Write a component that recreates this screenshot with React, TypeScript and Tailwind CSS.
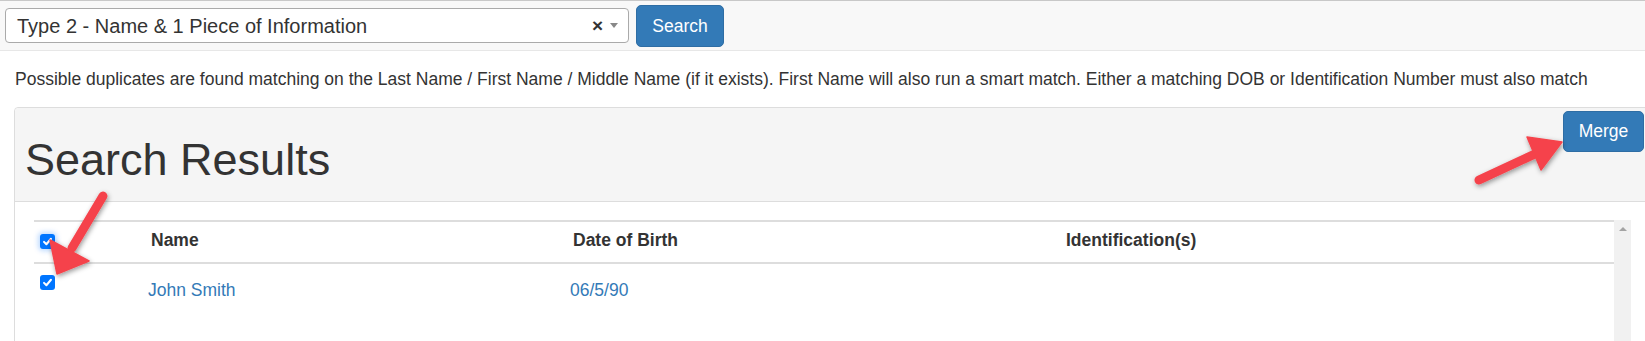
import React from 'react';

function CheckBox({ glow = false }: { glow?: boolean }) {
  return (
    <span
      className={
        'flex h-[15px] w-[15px] items-center justify-center rounded-[3px] bg-[#0075ff] ' +
        (glow ? 'shadow-[0_0_5px_2px_rgba(0,117,255,0.25)]' : '')
      }
    >
      <svg width="11" height="11" viewBox="0 0 12 12">
        <path d="M2.2 6.4 L4.8 9 L9.8 3" fill="none" stroke="#fff" strokeWidth="2.2" strokeLinecap="round" strokeLinejoin="round" />
      </svg>
    </span>
  );
}

function Annotations() {
  return (
    <svg className="pointer-events-none absolute left-0 top-0" width="1645" height="341">
      <defs>
        <filter id="shade" x="-30%" y="-30%" width="160%" height="160%">
          <feDropShadow dx="1" dy="2" stdDeviation="2.5" floodColor="#000" floodOpacity="0.4" />
        </filter>
      </defs>
      {/* arrow to checkbox */}
      <g filter="url(#shade)" fill="#f5434b" stroke="#f5434b">
        <line x1="103" y1="196" x2="72" y2="248" strokeWidth="9" strokeLinecap="round" />
        <polygon points="57,274 50,240 89,261" strokeWidth="1.5" strokeLinejoin="round" />
      </g>
      {/* arrow to merge */}
      <g filter="url(#shade)" fill="#f5434b" stroke="#f5434b">
        <line x1="1479" y1="180" x2="1537" y2="153" strokeWidth="9" strokeLinecap="round" />
        <polygon points="1562,142 1527,137 1541,170" strokeWidth="1.5" strokeLinejoin="round" />
      </g>
    </svg>
  );
}

export default function App() {
  return (
    <div className="relative h-[341px] w-[1645px] overflow-hidden bg-white font-['Liberation_Sans',Arial,sans-serif] text-[#333]">
      {/* Toolbar */}
      <div className="flex h-[51px] items-start border-t border-b border-t-[#c8c8c8] border-b-[#e7e7e7] bg-[#f8f8f8]">
        <div className="ml-[5px] mt-[7px] flex h-[35px] w-[624px] items-center rounded-[4px] border border-[#aaa] bg-white pl-[11px] pr-[10px]">
          <span className="flex-1 text-[20px] leading-none">Type 2 - Name &amp; 1 Piece of Information</span>
          <span className="mr-[7px] text-[19px] font-bold leading-none text-[#333]">×</span>
          <span className="h-0 w-0 border-l-[4px] border-r-[4px] border-t-[5px] border-l-transparent border-r-transparent border-t-[#888]" />
        </div>
        <button className="ml-[7px] mt-[4px] h-[42px] w-[88px] rounded-[5px] border border-[#2e6da4] bg-[#337ab7] text-[17.5px] text-white">
          Search
        </button>
      </div>

      <p className="ml-[15px] mt-[16px] whitespace-nowrap text-[17.5px] leading-[25px]">
        Possible duplicates are found matching on the Last Name / First Name / Middle Name (if it exists). First Name will also run a smart match. Either a matching DOB or Identification Number must also match
      </p>

      {/* Panel */}
      <div className="ml-[14px] mt-[15px] h-[260px] w-[1640px] rounded-[4px] border border-[#ddd]">
        <div className="flex h-[94px] items-start justify-between rounded-t-[4px] border-b border-[#ddd] bg-[#f5f5f5]">
          <h1 className="ml-[10px] mt-[27px] text-[45px] font-normal leading-[49.5px]">Search Results</h1>
          <button className="mr-[9px] mt-[3px] h-[41px] w-[81px] rounded-[5px] border border-[#2e6da4] bg-[#337ab7] text-[17.5px] text-white">
            Merge
          </button>
        </div>

        <div className="flex pl-[19px] pt-[18px]">
          <div className="w-[1580px]">
            <div className="grid h-[44px] grid-cols-[114px_422px_493px_1fr] items-center border-t-2 border-b-2 border-[#ddd] pb-[4px] text-[17.5px] font-bold">
              <div className="pl-[6px] pt-[3px]">
                <CheckBox glow />
              </div>
              <div className="pl-[3px]">Name</div>
              <div className="pl-[3px]">Date of Birth</div>
              <div className="pl-[3px]">Identification(s)</div>
            </div>
            <div className="grid grid-cols-[114px_422px_493px_1fr] items-start text-[17.5px] leading-[25px]">
              <div className="pl-[6px] pt-[11px]">
                <CheckBox />
              </div>
              <a className="pt-[14px] text-[#337ab7]">John Smith</a>
              <a className="pt-[14px] text-[#337ab7]">06/5/90</a>
              <div />
            </div>
          </div>
          <div className="flex h-[130px] w-[17px] justify-center bg-[#f1f1f1] pt-[7px]">
            <span className="h-0 w-0 border-b-[4px] border-l-[4px] border-r-[4px] border-b-[#a3a3a3] border-l-transparent border-r-transparent" />
          </div>
        </div>
      </div>

      <Annotations />
    </div>
  );
}
